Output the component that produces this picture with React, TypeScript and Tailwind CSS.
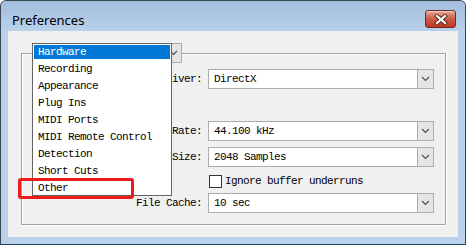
import React from 'react';

const mono = "font-['Liberation_Mono',monospace] text-[11px] tracking-[-0.6px] text-black";

const Chevron = () => (
  <svg width="9" height="6" viewBox="0 0 9 6">
    <path d="M1 1 L4.5 4.5 L8 1" fill="none" stroke="#4d4d4d" strokeWidth="1.1" />
  </svg>
);

const Combo = ({ value, width = 'w-[226px]' }: { value: string; width?: string }) => (
  <div className={`flex h-[20px] ${width} border border-[#acacac] bg-white`}>
    <div className="flex flex-1 items-center pl-[5px] whitespace-pre">{value}</div>
    <div className="flex w-[16px] items-center justify-center border-l border-[#acacac] bg-[#e5e5e5]">
      <Chevron />
    </div>
  </div>
);

const Row = ({ label, value, className }: { label: string; value: string; className: string }) => (
  <div className={`flex items-center ${className}`}>
    <div className="w-[180px] text-right whitespace-pre">{label}</div>
    <div className="ml-[6px]">
      <Combo value={value} />
    </div>
  </div>
);

const pages = [
  'Hardware',
  'Recording',
  'Appearance',
  'Plug Ins',
  'MIDI Ports',
  'MIDI Remote Control',
  'Detection',
  'Short Cuts',
  'Other',
];

export default function App() {
  return (
    <div className="flex h-[245px] w-[466px] flex-col overflow-hidden rounded-t-[6px] border border-[#3a4753] border-b-[#1d4656] bg-[#b9d1ea]">
      {/* Title bar */}
      <div className="flex h-[30px] items-start justify-between bg-linear-to-b from-[#a2bddb] to-[#b9d1eb]">
        <div className="pl-[11px] pt-[9px] font-['Noto_Sans',sans-serif] text-[13px] leading-[20px] text-black">
          Preferences
        </div>
        <div className="mr-[9px] mt-[9px] flex h-[18px] w-[31px] items-center justify-center rounded-[3px] border border-[#6e2a22] bg-linear-to-b from-[#e3a797] via-[#c85a45] to-[#c1381f] shadow-[inset_0_1px_0_rgba(255,255,255,0.45)]">
          <svg width="14" height="11" viewBox="0 0 14 11">
            <path d="M3 2 L11 9 M11 2 L3 9" stroke="#5a2a22" strokeWidth="4" strokeLinecap="square" />
            <path d="M3 2 L11 9 M11 2 L3 9" stroke="#ffffff" strokeWidth="2.2" strokeLinecap="square" />
          </svg>
        </div>
      </div>

      {/* Client area */}
      <div className={`mx-[7px] mb-[7px] flex flex-1 bg-[#f0f0f0] pb-[12px] pl-[13px] pr-[12px] pt-[22px] ${mono}`}>
        <div className="relative flex flex-1 flex-col border border-[#a0a0a0] shadow-[1px_1px_0_#ffffff,inset_1px_1px_0_#ffffff]">
          {/* header combo sitting on the group border */}
          <div className="absolute left-[10px] top-[-11px]">
            <Combo value="" width="w-[150px]" />
          </div>

          <Row label="Driver:" value="DirectX" className="mt-[15px]" />
          <Row label="Sample Rate:" value="44.100 kHz" className="mt-[32px]" />
          <Row label="Buffer Size:" value="2048 Samples" className="mt-[6px]" />
          <div className="mt-[8px] flex h-[13px] items-center pl-[187px]">
            <div className="h-[13px] w-[13px] border border-[#333333] bg-white" />
            <span className="ml-[3px] whitespace-pre">Ignore buffer underruns</span>
          </div>
          <Row label="File Cache:" value="10 sec" className="mt-[5px]" />

          {/* dropped-down list */}
          <div className="absolute left-[10px] top-[-11px] z-10 flex h-[153px] w-[140px] flex-col gap-[3px] border border-[#646464] bg-white p-[1px]">
            {pages.map((p, i) => (
              <div
                key={p}
                className={`flex h-[14px] items-center pl-[4px] whitespace-pre ${
                  i === 0 ? 'bg-[#0078d7] text-white' : ''
                }`}
              >
                {p}
              </div>
            ))}
          </div>

          {/* annotation box */}
          <div className="absolute left-[-4px] top-[124px] z-20 h-[21px] w-[116px] rounded-[3px] border-[3px] border-[#ec1c1c]" />
        </div>
      </div>
    </div>
  );
}
